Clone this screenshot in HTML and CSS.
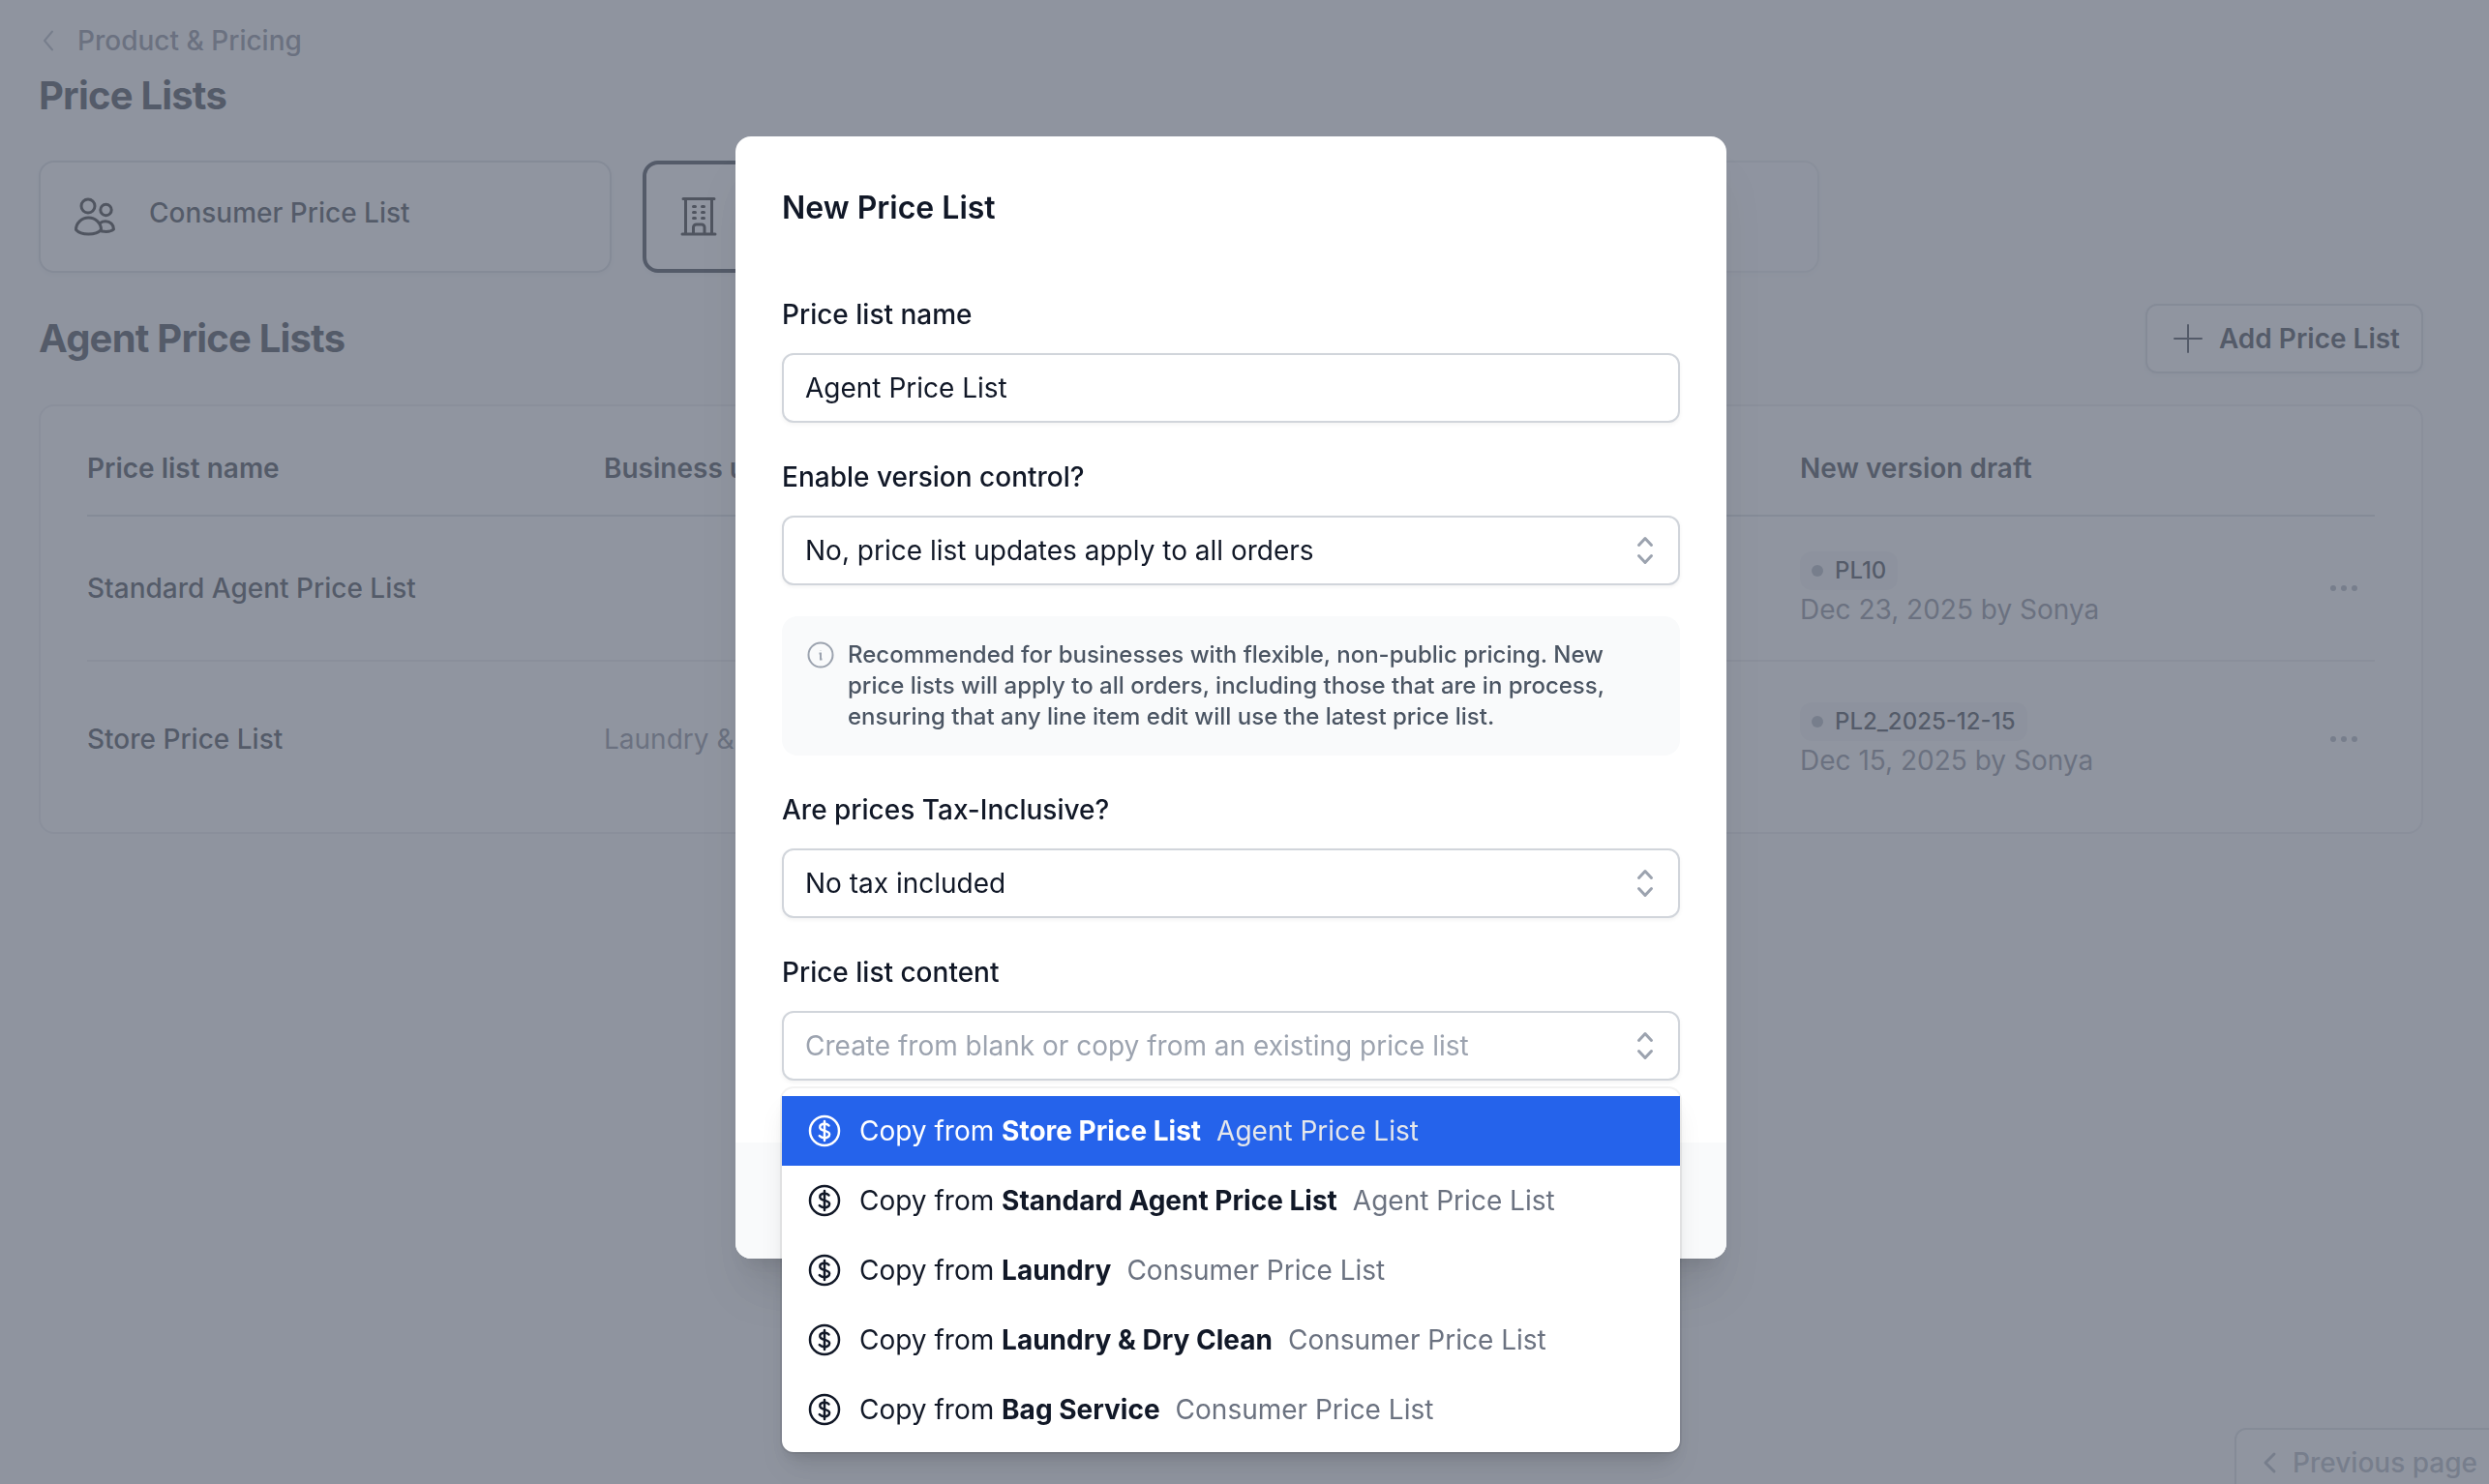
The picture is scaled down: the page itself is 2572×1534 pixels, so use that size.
FILE: index.html
```
<!DOCTYPE html>
<html lang="en">
<head>
  <meta charset="UTF-8">
  <meta name="viewport" content="width=device-width, initial-scale=1.0">
  <title>Price Lists</title>
  <link rel="stylesheet" href="styles.css">
</head>
<body>
  <svg class="sprite" aria-hidden="true">
    <symbol id="selector" viewBox="0 0 20 20">
      <path d="M10 3a.75.75 0 01.55.24l3.25 3.5a.75.75 0 11-1.1 1.02L10 4.852 7.3 7.76a.75.75 0 01-1.1-1.02l3.25-3.5A.75.75 0 0110 3zm-3.76 9.2a.75.75 0 011.06.04l2.7 2.908 2.7-2.908a.75.75 0 111.1 1.02l-3.25 3.5a.75.75 0 01-1.1 0l-3.25-3.5a.75.75 0 01.04-1.06z"/>
    </symbol>
    <symbol id="dollar" viewBox="0 0 40 40">
      <g fill="none" stroke="currentColor" stroke-width="2.5" stroke-linecap="round" stroke-linejoin="round">
        <circle cx="20" cy="20" r="15"/>
        <path d="M20 10v20"/>
        <path d="M24.5 14.500c-1-1.200-2.600-1.700-4.500-1.700-2.800 0-4.700 1.400-4.700 3.400 0 4.800 9.800 2.600 9.800 7.400 0 2.100-2.100 3.600-5.100 3.600-2.100 0-4-.7-5.200-2"/>
      </g>
    </symbol>
    <symbol id="dots" viewBox="0 0 32 32">
      <circle cx="5" cy="16" r="3"/>
      <circle cx="16" cy="16" r="3"/>
      <circle cx="27" cy="16" r="3"/>
    </symbol>
  </svg>

  <main class="page">
    <a class="back" href="#">
      <svg class="back-icon" viewBox="0 0 20 24"><path d="M14 2.500L6 12l8 9.500"/></svg>
      Product &amp; Pricing
    </a>
    <h1>Price Lists</h1>

    <div class="types">
      <button class="type">
        <svg class="type-icon" viewBox="0 0 48 48">
          <circle cx="17" cy="13" r="7"/>
          <circle cx="35.5" cy="17" r="5.7"/>
          <path d="M17.500 25c-7 0-13 5.500-13 12.500 3 3.500 8 4.500 13 4.500s10-1 13-4.500c0-7-6-12.500-13-12.500z"/>
          <path d="M29.500 30.500c1.700-1.200 3.500-1.700 5.500-1.700 5 0 8.500 3.500 8.500 8.200-2 2-7 2.800-12.500 2"/>
        </svg>
        Consumer Price List
      </button>
      <button class="type type-active" aria-label="Agent">
        <svg class="type-icon" viewBox="0 0 48 48">
          <path d="M8 5.500h32M10.500 5.500V42M37.500 5.500V42M7 42h34M18.500 42v-7a3 3 0 013-3h5.500a3 3 0 013 3v7"/>
          <path d="M18.500 13.500h2M27.500 13.500h2M18.500 19.500h2M27.500 19.500h2M18.500 25.500h2M27.500 25.500h2"/>
        </svg>
      </button>
      <button class="type type-disabled" disabled></button>
    </div>

    <div class="section-head">
      <h2>Agent Price Lists</h2>
      <button class="add">
        <svg class="add-icon" viewBox="0 0 32 32"><path d="M16 2v28M2 16h28"/></svg>
        Add Price List
      </button>
    </div>

    <div class="panel">
      <table>
        <colgroup>
          <col class="col-name">
          <col>
          <col class="col-draft">
          <col class="col-menu">
        </colgroup>
        <thead>
          <tr>
            <th>Price list name</th>
            <th>Business unit</th>
            <th>New version draft</th>
            <th></th>
          </tr>
        </thead>
        <tbody>
          <tr>
            <td class="name">Standard Agent Price List</td>
            <td></td>
            <td><div class="draft"><span class="badge">PL10</span><div>Dec 23, 2025 by Sonya</div></div></td>
            <td><button class="more" aria-label="More"><svg><use href="#dots"/></svg></button></td>
          </tr>
          <tr>
            <td class="name">Store Price List</td>
            <td>Laundry &amp; Dry Clean</td>
            <td><div class="draft"><span class="badge">PL2_2025-12-15</span><div>Dec 15, 2025 by Sonya</div></div></td>
            <td><button class="more" aria-label="More"><svg><use href="#dots"/></svg></button></td>
          </tr>
        </tbody>
      </table>
    </div>

    <button class="previous" disabled>
      <svg class="previous-icon" viewBox="0 0 16 24"><path d="M13 3L4 12l9 9"/></svg>
      Previous page
    </button>
  </main>

  <div class="overlay">
    <form class="modal" role="dialog" aria-labelledby="modal-title">
      <div class="modal-body">
        <h3 id="modal-title">New Price List</h3>

        <div class="field">
          <label for="name">Price list name</label>
          <input class="control" id="name" type="text" value="Agent Price List">
        </div>

        <div class="field">
          <label for="version">Enable version control?</label>
          <div class="select">
            <select class="control" id="version">
              <option>No, price list updates apply to all orders</option>
            </select>
            <svg class="selector"><use href="#selector"/></svg>
          </div>
          <div class="hint">
            <svg class="hint-icon" viewBox="0 0 32 32">
              <circle cx="16" cy="16" r="12.500"/>
              <path d="M14.500 14.500h1.500v6h1.500M16 11v.2"/>
            </svg>
            <p>Recommended for businesses with flexible, non-public pricing. New price lists will apply to all orders, including those that are in process, ensuring that any line item edit will use the latest price list.</p>
          </div>
        </div>

        <div class="field">
          <label for="tax">Are prices Tax-Inclusive?</label>
          <div class="select">
            <select class="control" id="tax">
              <option>No tax included</option>
            </select>
            <svg class="selector"><use href="#selector"/></svg>
          </div>
        </div>

        <div class="field">
          <label for="content">Price list content</label>
          <div class="select">
            <input class="control" id="content" type="text" role="combobox" aria-expanded="true" aria-controls="content-menu" placeholder="Create from blank or copy from an existing price list">
            <svg class="selector"><use href="#selector"/></svg>
            <div class="menu" id="content-menu" role="listbox">
              <button type="button" class="option option-active" role="option" aria-selected="true">
                <svg><use href="#dollar"/></svg>
                <span>Copy from <b>Store Price List</b></span>
                <span class="kind">Agent Price List</span>
              </button>
              <button type="button" class="option" role="option">
                <svg><use href="#dollar"/></svg>
                <span>Copy from <b>Standard Agent Price List</b></span>
                <span class="kind">Agent Price List</span>
              </button>
              <button type="button" class="option" role="option">
                <svg><use href="#dollar"/></svg>
                <span>Copy from <b>Laundry</b></span>
                <span class="kind">Consumer Price List</span>
              </button>
              <button type="button" class="option" role="option">
                <svg><use href="#dollar"/></svg>
                <span>Copy from <b>Laundry &amp; Dry Clean</b></span>
                <span class="kind">Consumer Price List</span>
              </button>
              <button type="button" class="option" role="option">
                <svg><use href="#dollar"/></svg>
                <span>Copy from <b>Bag Service</b></span>
                <span class="kind">Consumer Price List</span>
              </button>
            </div>
          </div>
        </div>
      </div>
      <div class="modal-footer"></div>
    </form>
  </div>
</body>
</html>
```
FILE: styles.css
```
* {
  box-sizing: border-box;
}

body {
  margin: 0;
  font-family: Inter, "Liberation Sans", sans-serif;
  font-size: 28px;
  line-height: 40px;
  color: #111827;
  background: #f9fafb;
  overflow: hidden;
}

h1, h2, h3, p {
  margin: 0;
}

button, input, select {
  font: inherit;
  color: inherit;
}

.sprite {
  display: none;
}

/* page */
.page {
  min-height: 100vh;
  padding: 22px 68px 0 40px;
}

.back {
  display: flex;
  align-items: center;
  gap: 20px;
  color: #6b7280;
  font-weight: 500;
  text-decoration: none;
}

.back-icon {
  width: 20px;
  height: 24px;
  fill: none;
  stroke: #9ca3af;
  stroke-width: 2;
  stroke-linecap: round;
  stroke-linejoin: round;
}

h1, h2 {
  font-size: 40px;
  line-height: 56px;
  font-weight: 700;
  letter-spacing: -0.02em;
}

h1 {
  margin-top: 9px;
}

.types {
  display: grid;
  grid-template-columns: repeat(3, 1fr);
  gap: 32px;
  max-width: 1840px;
  margin-top: 39px;
}

.type {
  display: flex;
  align-items: center;
  gap: 32px;
  height: 116px;
  padding: 0 32px 8px;
  border: 2px solid #d1d5db;
  border-radius: 16px;
  background: #fff;
  font-weight: 500;
  box-shadow: 0 2px 4px rgba(0, 0, 0, 0.05);
}

.type-active {
  padding: 0 30px 8px;
  border: 4px solid #111827;
}

.type-disabled {
  opacity: 0.5;
}

.type-icon {
  width: 48px;
  height: 48px;
  margin-top: 8px;
  fill: none;
  stroke: #000;
  stroke-width: 3;
  stroke-linecap: round;
  stroke-linejoin: round;
}

.section-head {
  display: flex;
  align-items: center;
  justify-content: space-between;
  margin-top: 32px;
}

.add {
  display: flex;
  align-items: center;
  gap: 16px;
  height: 72px;
  padding: 0 22px 0 26px;
  border: 2px solid #d1d5db;
  border-radius: 12px;
  background: #fff;
  font-weight: 600;
  box-shadow: 0 2px 4px rgba(0, 0, 0, 0.05);
}

.add-icon {
  width: 32px;
  height: 32px;
  fill: none;
  stroke: currentColor;
  stroke-width: 2;
  stroke-linecap: round;
}

.panel {
  margin-top: 32px;
  padding: 28px 48px 22px;
  border: 2px solid #e5e7eb;
  border-radius: 16px;
  background: #fff;
}

table {
  width: 100%;
  table-layout: fixed;
  border-collapse: collapse;
}

.col-name {
  width: 534px;
}

.col-draft {
  width: 542px;
}

.col-menu {
  width: 52px;
}

th {
  padding: 16px 0 28px;
  border-bottom: 2px solid #d1d5db;
  font-weight: 600;
  text-align: left;
}

td {
  padding: 32px 0;
  color: #6b7280;
}

tr + tr td {
  padding-top: 38px;
  border-top: 2px solid #e5e7eb;
}

td.name {
  color: #111827;
  font-weight: 500;
}

.draft {
  padding-top: 4px;
}

.badge {
  display: inline-flex;
  align-items: center;
  gap: 12px;
  height: 40px;
  padding: 0 12px;
  border-radius: 12px;
  background: #f3f4f6;
  color: #111827;
  font-size: 24px;
  font-weight: 500;
  vertical-align: top;
}

.badge::before {
  content: "";
  width: 12px;
  height: 12px;
  border-radius: 50%;
  background: #9ca3af;
}

.more {
  display: flex;
  padding: 4px;
  border: 0;
  background: none;
}

.more svg {
  width: 32px;
  height: 32px;
  fill: #9ca3af;
}

.previous {
  position: fixed;
  right: -16px;
  bottom: -14px;
  display: flex;
  align-items: center;
  gap: 16px;
  height: 72px;
  padding: 0 26px;
  border: 2px solid #d1d5db;
  border-radius: 12px;
  background: #fff;
  color: #9ca3af;
  font-weight: 500;
}

.previous-icon {
  width: 16px;
  height: 24px;
  fill: none;
  stroke: currentColor;
  stroke-width: 3;
  stroke-linecap: round;
  stroke-linejoin: round;
}

/* modal */
.overlay {
  position: fixed;
  inset: 0;
  display: flex;
  align-items: flex-start;
  justify-content: center;
  padding: 141px 28px 0 0;
  background: rgba(107, 114, 128, 0.75);
}

.modal {
  width: 1024px;
  border-radius: 16px;
  background: #fff;
  box-shadow: 0 40px 50px -10px rgba(0, 0, 0, 0.1), 0 16px 20px -12px rgba(0, 0, 0, 0.1);
}

.modal-body {
  display: flex;
  flex-direction: column;
  gap: 36px;
  padding: 50px 48px 64px;
}

.modal-footer {
  height: 120px;
  border-radius: 0 0 16px 16px;
  background: #f9fafb;
}

h3 {
  margin-bottom: 30px;
  font-size: 32px;
  line-height: 48px;
  font-weight: 600;
}

label {
  display: block;
  margin-bottom: 20px;
  font-weight: 500;
}

.control {
  display: block;
  width: 100%;
  height: 72px;
  padding: 0 22px;
  border: 2px solid #d1d5db;
  border-radius: 12px;
  background: #fff;
  box-shadow: 0 2px 4px rgba(0, 0, 0, 0.05);
  appearance: none;
}

.control::placeholder {
  color: #9ca3af;
  opacity: 1;
}

.select {
  position: relative;
}

.selector {
  position: absolute;
  top: 16px;
  right: 16px;
  width: 40px;
  height: 40px;
  fill: #9ca3af;
  pointer-events: none;
}

.hint {
  display: flex;
  gap: 12px;
  margin-top: 32px;
  padding: 24px;
  border-radius: 16px;
  background: #f9fafb;
  color: #4b5563;
  font-size: 24px;
  line-height: 32px;
  font-weight: 500;
}

.hint-icon {
  flex: none;
  width: 32px;
  height: 32px;
  fill: none;
  stroke: #9ca3af;
  stroke-width: 2;
}

.menu {
  position: absolute;
  top: 80px;
  left: 0;
  right: 0;
  padding: 8px 0;
  border-radius: 12px;
  background: #fff;
  box-shadow: 0 0 0 2px rgba(0, 0, 0, 0.05), 0 20px 30px -6px rgba(0, 0, 0, 0.1), 0 8px 12px -4px rgba(0, 0, 0, 0.1);
}

.option {
  display: flex;
  align-items: center;
  gap: 16px;
  width: 100%;
  height: 72px;
  padding: 0 24px;
  border: 0;
  background: none;
}

.option svg {
  width: 40px;
  height: 40px;
}

.option b {
  font-weight: 700;
}

.kind {
  color: #6b7280;
}

.option-active {
  background: #2563eb;
  color: #fff;
}

.option-active .kind {
  color: #e5e7eb;
}
```
